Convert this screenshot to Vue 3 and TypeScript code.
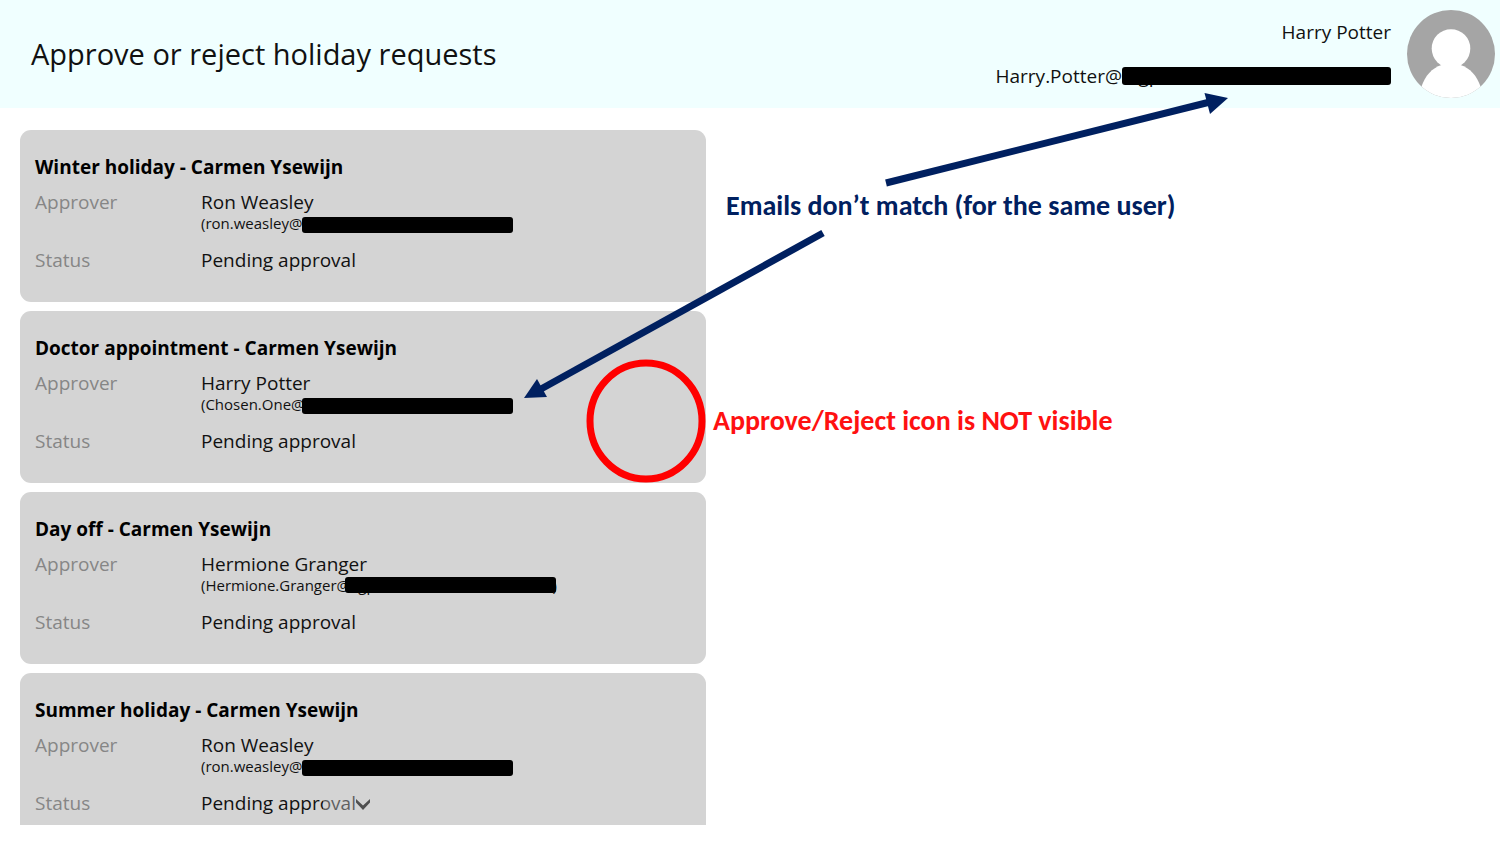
<script setup lang="ts">
interface HolidayRequest {
  title: string
  approver: string
  account: string
  domain: string
  closing: string
  status: string
}

const user = { name: 'Harry Potter', account: 'Harry.Potter@', domain: 'agp' }

const requests: HolidayRequest[] = [
  { title: 'Winter holiday - Carmen Ysewijn', approver: 'Ron Weasley', account: '(ron.weasley@', domain: '', closing: '', status: 'Pending approval' },
  { title: 'Doctor appointment - Carmen Ysewijn', approver: 'Harry Potter', account: '(Chosen.One@', domain: '', closing: '', status: 'Pending approval' },
  { title: 'Day off - Carmen Ysewijn', approver: 'Hermione Granger', account: '(Hermione.Granger@', domain: 'agp', closing: ')', status: 'Pending approval' },
  { title: 'Summer holiday - Carmen Ysewijn', approver: 'Ron Weasley', account: '(ron.weasley@', domain: '', closing: '', status: 'Pending approval' },
]
</script>

<template>
  <div class="screen">
    <header class="top-bar">
      <h1>Approve or reject holiday requests</h1>
      <div class="user">
        <div class="user-text">
          <div>{{ user.name }}</div>
          <div class="email">
            {{ user.account }}<span class="masked">{{ user.domain }}</span>
          </div>
        </div>
        <svg class="avatar" viewBox="0 0 88 88" role="img" aria-label="User photo">
          <defs>
            <clipPath id="avatar-clip"><circle cx="44" cy="44" r="44" /></clipPath>
          </defs>
          <g clip-path="url(#avatar-clip)">
            <rect width="88" height="88" fill="#a5a5a5" />
            <circle cx="44" cy="38.500" r="19.300" fill="#fff" />
            <path d="M14.500 76.500C18 66 25 58 34.500 55H53.500C63 58 70 66 73.500 76.500V88H14.500Z" fill="#fff" />
          </g>
        </svg>
      </div>
    </header>

    <main class="gallery">
      <article v-for="request in requests" :key="request.title" class="card">
        <h2>{{ request.title }}</h2>
        <dl>
          <dt>Approver</dt>
          <dd>
            <div>{{ request.approver }}</div>
            <div class="email small" :class="{ long: request.closing }">
              <span>{{ request.account }}</span>
              <span v-if="request.domain" class="domain">{{ request.domain }}</span>
              <span v-if="request.closing">{{ request.closing }}</span>
            </div>
          </dd>
          <dt>Status</dt>
          <dd>{{ request.status }}</dd>
        </dl>
      </article>
      <button class="scroll-down" type="button" aria-label="Scroll down">
        <svg width="16" height="12" viewBox="0 0 16 12">
          <path d="M1 0V3.500L8 11L15 3.500V0L8 6.500Z" fill="#505050" />
        </svg>
      </button>
    </main>

    <svg class="marks" width="1500" height="842" viewBox="0 0 1500 842" aria-hidden="true">
      <g fill="#002060" stroke="none">
        <path d="M886 183L1210 102" stroke="#002060" stroke-width="7" />
        <path d="M1204.500 93L1228 98L1210 114Z" />
        <path d="M823 233L541 389" stroke="#002060" stroke-width="7" />
        <path d="M537 379L524 398L547 397Z" />
      </g>
      <ellipse cx="646" cy="421" rx="56" ry="58" fill="none" stroke="#f00" stroke-width="7" />
    </svg>
    <p class="note mismatch">Emails don’t match (for the same user)</p>
    <p class="note missing">Approve/Reject icon is NOT visible</p>
  </div>
</template>

<style>
body {
  margin: 0;
  background: #fff;
}
</style>

<style scoped>
.screen {
  position: relative;
  display: flex;
  flex-direction: column;
  box-sizing: border-box;
  height: 100vh;
  padding-bottom: 17px;
  overflow: hidden;
  font-family: "Open Sans", "Noto Sans", sans-serif;
  font-size: 19px;
  line-height: 24px;
  color: #111;
}
.top-bar {
  flex: none;
  display: flex;
  align-items: center;
  justify-content: space-between;
  padding: 10px 5px 10px 31px;
  background: #f0ffff;
}
h1 {
  margin: 0;
  font-size: 29px;
  font-weight: 400;
  line-height: 40px;
}
.user {
  display: flex;
  align-items: center;
  gap: 16px;
}
.user-text {
  text-align: right;
  line-height: 44px;
}
.avatar {
  width: 88px;
  height: 88px;
}
.email {
  display: flex;
  white-space: nowrap;
}
.masked {
  position: relative;
  width: 269px;
  text-align: left;
  text-indent: 6px;
}
.masked::after,
.small::after {
  content: "";
  position: absolute;
  border-radius: 3px;
  background: #000;
}
.masked::after {
  inset: 13px 0;
}
.small {
  position: relative;
  font-size: 15px;
  line-height: 18px;
}
.small::after {
  top: 3px;
  left: 101px;
  width: 211px;
  height: 16px;
}
.small.long {
  width: 356px;
}
.small.long::after {
  top: 1px;
  left: 144px;
}
.domain {
  flex: 1;
}
.gallery {
  position: relative;
  flex: 1;
  min-height: 0;
  display: flex;
  flex-direction: column;
  gap: 9px;
  width: calc(46% - 4px);
  margin: 22px 0 0 20px;
  overflow: hidden;
}
.card {
  flex: none;
  padding: 23px 15px 30px;
  border-radius: 11px;
  background: #d4d4d4;
}
h2 {
  margin: 0 0 9px;
  font-size: 19px;
  font-weight: 700;
  line-height: 28px;
  color: #000;
}
dl {
  display: grid;
  grid-template-columns: 166px 1fr;
  row-gap: 16px;
  margin: 0;
}
dt {
  color: #868686;
}
dd {
  margin: 0;
}
.scroll-down {
  position: absolute;
  bottom: 0;
  left: 50%;
  width: 80px;
  height: 40px;
  margin-left: -40px;
  padding: 0;
  border: 0;
  background: rgba(212, 212, 212, 0.4);
}
.scroll-down svg {
  display: block;
  margin: 0 auto;
}
.marks {
  position: absolute;
  top: 0;
  left: 0;
  pointer-events: none;
}
.note {
  position: absolute;
  margin: 0;
  font-family: Carlito, Calibri, Lato, sans-serif;
  font-size: 28px;
  font-weight: 700;
  line-height: 32px;
  white-space: nowrap;
}
.mismatch {
  top: 190px;
  left: 726px;
  color: #002060;
}
.missing {
  top: 405px;
  left: 713px;
  color: #f11;
}
</style>
